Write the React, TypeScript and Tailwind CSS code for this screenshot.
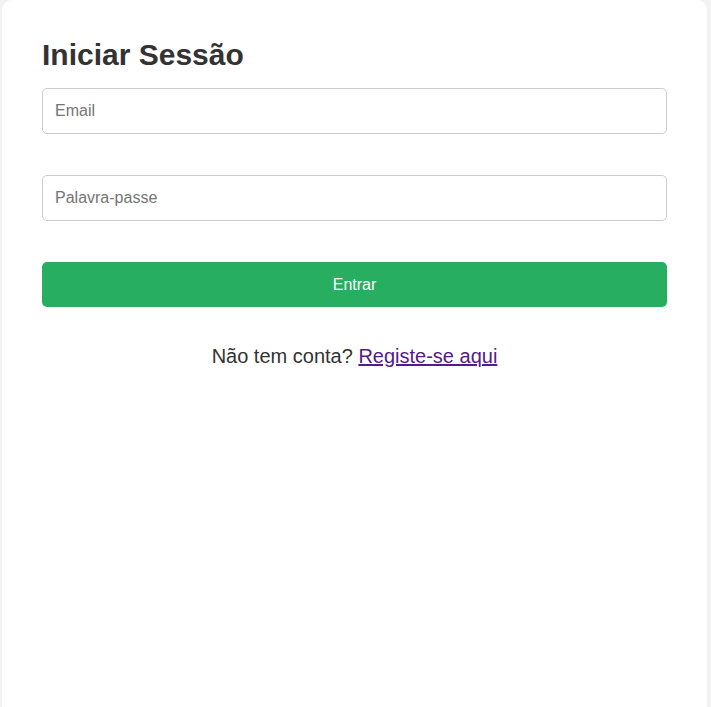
export default function App() {
  const font = { fontFamily: '"Liberation Sans", Arial, sans-serif' }
  const input =
    'block w-full h-[46px] px-3 text-base text-[#333] bg-white border border-[#cccccc] rounded-[5px] outline-none placeholder:text-[#757575]'

  return (
    <div
      className="h-[707px] overflow-hidden bg-[#f2f2f2] pl-[2px] pr-[4px] font-['Liberation_Sans',Arial,sans-serif]"
      style={font}
    >
      <div className="h-[760px] bg-white rounded-[10px] px-10 pt-[38px]">
        <h2 className="text-[30px] leading-[34px] font-bold text-[#333]">Iniciar Sessão</h2>

        <form className="mt-[16px]" onSubmit={(e) => e.preventDefault()}>
          <input type="email" placeholder="Email" className={input} />
          <input type="password" placeholder="Palavra-passe" className={`${input} mt-[41px]`} />
          <button
            type="submit"
            className="mt-[41px] w-full h-[45px] bg-[#27ae60] text-white text-base rounded-[5px]"
          >
            Entrar
          </button>
        </form>

        <p className="mt-[38px] text-center text-[20px] leading-[23px] text-[#333]">
          Não tem conta?{' '}
          <a href="#" className="text-[#551a8b] underline">
            Registe-se aqui
          </a>
        </p>
      </div>
    </div>
  )
}
